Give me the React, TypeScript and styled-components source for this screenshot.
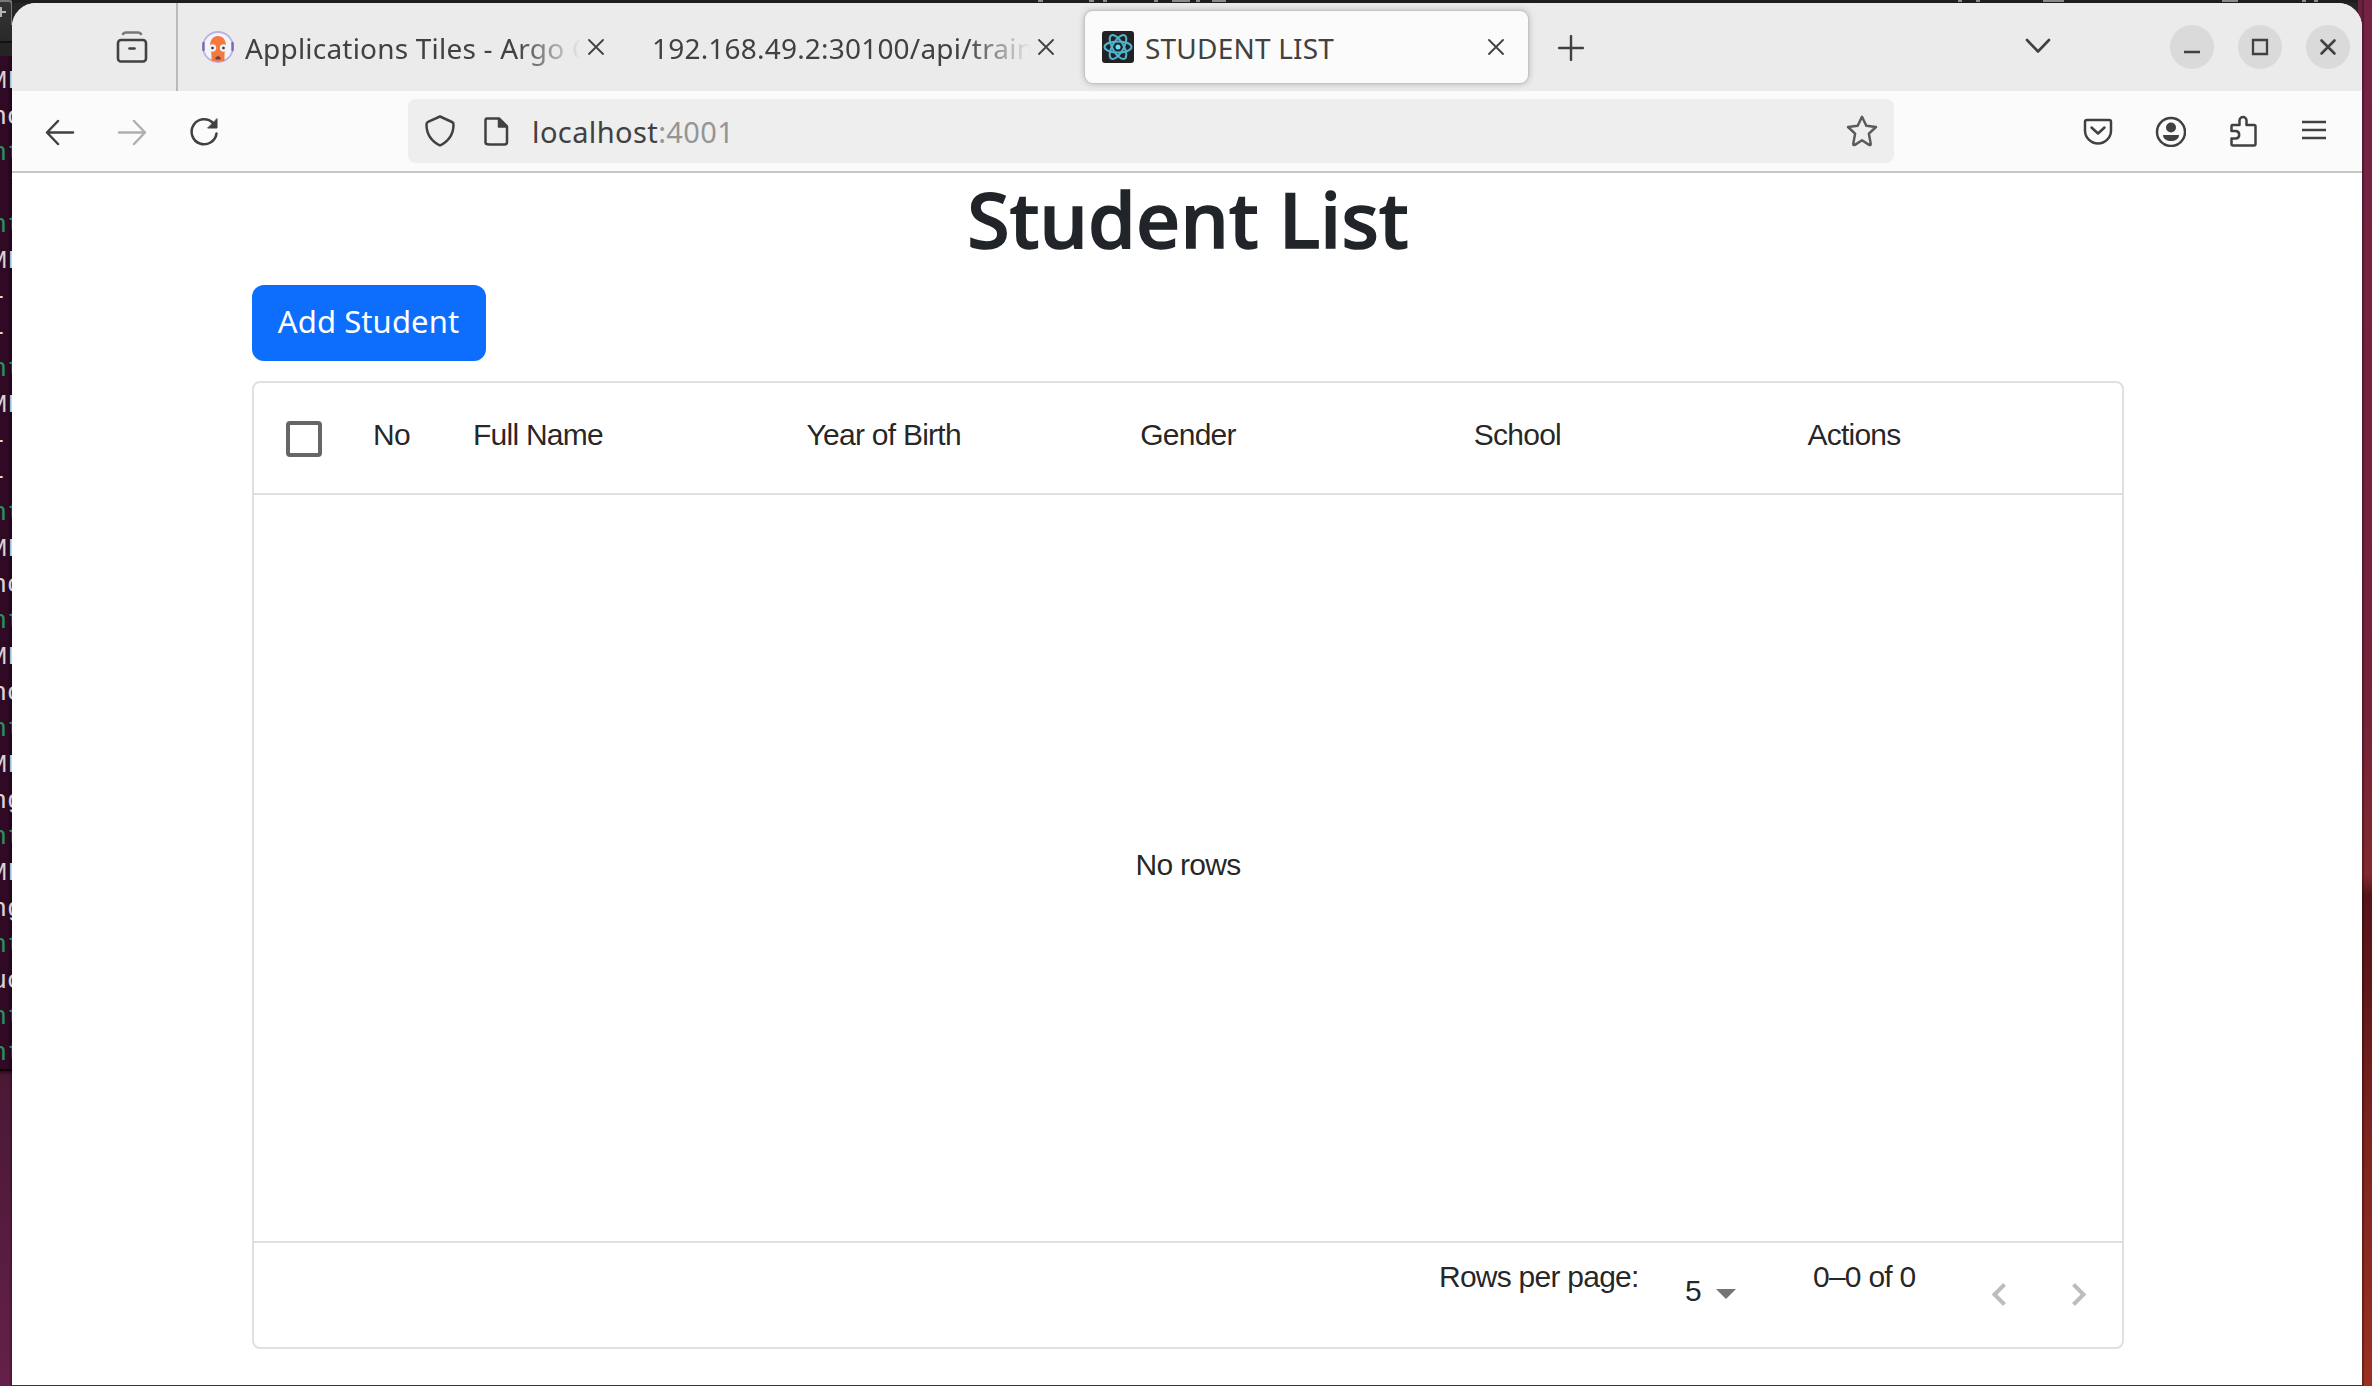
import React from "react";
import styled, { createGlobalStyle } from "styled-components";

const UI = `"Noto Sans", "Open Sans", sans-serif`;
const GRID = `"Liberation Sans", Arial, sans-serif`;

const Global = createGlobalStyle`
  *, *::before, *::after { box-sizing: border-box; }
  html, body { margin: 0; padding: 0; overflow: hidden; }
  svg { display: block; flex: none; }
`;

/* ---------- desktop behind the window ---------- */
const Desktop = styled.div`
  width: 2372px;
  height: 1386px;
  display: grid;
  grid-template-columns: 12px 2350px 10px;
  overflow: hidden;
  background: #6b2130;
`;
const Left = styled.div`
  display: flex;
  flex-direction: column;
  overflow: hidden;
  background: linear-gradient(90deg, transparent 9px, rgba(0, 0, 0, 0.3) 12px), linear-gradient(#2a0a1e 1071px, #4a1834 1075px, #64204a);
`;
const LeftBar = styled.div`
  height: 56px;
  flex: none;
  background: linear-gradient(#353535, #292929 41px, #121212 41px, #121212 43px, #242424 43px);
  overflow: hidden;
`;
const Terminal = styled.div`
  height: 1015px;
  flex: none;
  padding-top: 7px;
  overflow: hidden;
  border-bottom: 2px solid #100208;
  background: linear-gradient(90deg, #300a24 60%, #20041a);
`;
const TermLine = styled.div<{ $tone: string }>`
  height: 36px;
  margin-left: -9px;
  width: 40px;
  font: 26.6px/36px "Liberation Mono", monospace;
  white-space: pre;
  color: ${(p) => p.$tone};
`;
const Right = styled.div`
  box-shadow: inset 2px 0 1px rgba(0, 0, 0, 0.28);
  background: linear-gradient(
    #742344 0, #74223a 700px, #812a2e 875px, #561419 895px, #5f171a 985px, #7c241f 1130px, #9a3122 1386px
  );
`;
const Middle = styled.div`
  display: flex;
  flex-direction: column;
  background: linear-gradient(90deg, #262626 2346px, #6b2140 2346px) top / 100% 60px no-repeat, #6b2028;
`;
const TopStrip = styled.div`
  height: 3px;
  flex: none;
  background: linear-gradient(90deg, #1e1e1e 2346px, #6b2140 2346px);
`;
const Window = styled.div`
  height: 1382px;
  border-radius: 24px 24px 0 0;
  overflow: hidden;
  background: #fff;
  display: flex;
  flex-direction: column;
`;

/* ---------- browser chrome ---------- */
const TabStrip = styled.div`
  height: 88px;
  flex: none;
  display: flex;
  align-items: stretch;
  background: #ebebeb;
`;
const RecentArea = styled.div`
  width: 166px;
  padding: 28px 0 0 104px;
  border-right: 2px solid #bababa;
`;
const Tab = styled.div<{ $active?: boolean; $width: number; $left: number; $pad: number }>`
  width: ${(p) => p.$width}px;
  height: 72px;
  margin: 8px 0 0 ${(p) => p.$left}px;
  padding: 0 ${(p) => p.$pad}px 0 17px;
  display: flex;
  align-items: center;
  gap: 7px;
  border-radius: 8px;
  background: ${(p) => (p.$active ? "#fbfbfb" : "transparent")};
  box-shadow: ${(p) => (p.$active ? "0 0 0 1px #c4c4c4, 0 0 7px rgba(0,0,0,.3)" : "none")};
`;
const TabTitle = styled.div<{ $fade?: boolean }>`
  flex: 1;
  min-width: 0;
  height: 42px;
  padding: 2px 0 0 4px;
  font: 28px/40px ${UI};
  letter-spacing: 0.2px;
  color: #414141;
  white-space: nowrap;
  overflow: hidden;
  ${(p) => p.$fade && "mask-image: linear-gradient(90deg, #000 calc(100% - 64px), transparent 100%);"}
`;
const NewTab = styled.div`
  padding: 32px 0 0 30px;
`;
const ListTabs = styled.div`
  margin-left: auto;
  padding: 28px 0 0;
`;
const WindowButtons = styled.div`
  display: flex;
  gap: 24px;
  padding: 22px 12px 0 116px;
`;
const WindowButton = styled.div`
  width: 44px;
  height: 44px;
  border-radius: 50%;
  background: #dadada;
  display: grid;
  place-items: center;
`;
const Toolbar = styled.div`
  height: 82px;
  flex: none;
  display: flex;
  align-items: center;
  padding: 0 32px;
  background: #fbfbfb;
  border-bottom: 2px solid #c6c6c6;
`;
const NavButtons = styled.div`
  width: 364px;
  display: flex;
  gap: 40px;
`;
const UrlBar = styled.div`
  width: 1486px;
  height: 64px;
  padding: 0 16px;
  border-radius: 8px;
  background: #eee;
  display: flex;
  align-items: center;
`;
const UrlIcons = styled.div`
  display: flex;
  gap: 24px;
  width: 108px;
`;
const Url = styled.div`
  flex: 1;
  padding-top: 2px;
  font: 29px/40px ${UI};
  letter-spacing: 0.4px;
  color: #414141;
`;
const Port = styled.span`
  color: #959595;
`;
const ToolIcons = styled.div`
  margin-left: auto;
  display: flex;
  gap: 40px;
`;

/* ---------- page ---------- */
const Page = styled.main`
  flex: 1;
  padding: 0 238px 0 240px;
  display: flex;
  flex-direction: column;
`;
const Title = styled.h1`
  margin: 0;
  height: 112px;
  font: 500 77px/92px ${UI};
  letter-spacing: 0.25px;
  -webkit-text-stroke: 1.6px #212529;
  color: #212529;
  text-align: center;
`;
const AddButton = styled.button`
  width: 234px;
  height: 76px;
  margin: 0 0 20px;
  padding: 0 1px 5px 0;
  border: 0;
  border-radius: 12px;
  background: #0d6efd;
  color: #fff;
  font: 31px/44px ${UI};
  letter-spacing: 0.1px;
`;
const DataGrid = styled.section`
  height: 968px;
  border: 2px solid #e0e0e0;
  border-radius: 8px;
  display: flex;
  flex-direction: column;
  font: 30px/40px ${GRID};
  letter-spacing: -0.75px;
  color: rgba(0, 0, 0, 0.87);
`;
const HeadRow = styled.div`
  height: 112px;
  flex: none;
  display: grid;
  grid-template-columns: 100px 100px repeat(5, 333.6px);
  border-bottom: 2px solid #e0e0e0;
`;
const HeadCell = styled.div`
  padding: 32px 0 0 19px;
`;
const CheckCell = styled.div`
  padding: 38px 0 0 32px;
`;
const Checkbox = styled.div`
  width: 36px;
  height: 36px;
  border: 4px solid #666;
  border-radius: 4px;
`;
const Empty = styled.div`
  flex: 1;
  display: grid;
  place-items: center;
  padding-bottom: 6px;
`;
const Footer = styled.div`
  height: 106px;
  flex: none;
  border-top: 2px solid #e0e0e0;
  display: flex;
  justify-content: flex-end;
  padding: 14px 19px 0 0;
`;
const RowsLabel = styled.div`
  width: 246px;
`;
const PageSize = styled.div`
  width: 128px;
  display: flex;
  gap: 15px;
  padding-top: 14px;
`;
const Arrow = styled.i`
  margin-top: 18px;
  width: 0;
  height: 0;
  border: 10px solid transparent;
  border-top-color: #757575;
  border-bottom: 0;
`;
const RangeLabel = styled.div`
  width: 162px;
`;
const Pager = styled.div`
  display: flex;
  gap: 32px;
  padding-top: 13px;
`;

const INK = "#414141";
const Icon = ({ children, size = 32, color = INK, box = 32, w = 2.3 }: {
  children: React.ReactNode; size?: number; color?: string; box?: number; w?: number;
}) => (
  <svg width={size} height={size} viewBox={`0 0 ${box} ${box}`} fill="none" stroke={color}
    strokeWidth={w} strokeLinecap="round" strokeLinejoin="round">{children}</svg>
);
const Close = () => <Icon size={16} box={16} w={1.8}><path d="M1 1l14 14M15 1L1 15" /></Icon>;

const Argo = () => (
  <Icon>
    <circle cx="16" cy="16" r="15" fill="#f4f4fb" stroke="#b9b3e2" strokeWidth="1.8" />
    <path d="M1.5 12v7M30.500 12v7" stroke="#7d66b8" strokeWidth="2.4" />
    <path d="M8 15c0-6 3-10 8-10s8 4 8 10c0 4-1.500 5-1.500 9v5q-1.500 2-3 1-3.500 1.500-7 0-1.500.8-3-1v-5c0-4-1.500-5-1.500-9z" fill="#f4783f" stroke="none" />
    <circle cx="10.500" cy="17" r="3.700" fill="#eef2f4" stroke="none" />
    <circle cx="21.500" cy="17" r="3.700" fill="#eef2f4" stroke="none" />
    <circle cx="10.500" cy="17" r="1.300" fill="#333" stroke="none" />
    <circle cx="21.500" cy="17" r="1.300" fill="#333" stroke="none" />
    <path d="M13.500 26.500q2.500-2.500 5 0v2h-5z" fill="#5b4a48" stroke="none" />
  </Icon>
);
const ReactMark = () => (
  <Icon color="#4fb4d0" w={2}>
    <rect width="32" height="32" rx="3" fill="#222" stroke="none" />
    {[0, 60, 120].map((a) => (
      <ellipse key={a} cx="16" cy="16" rx="13.500" ry="5.600" transform={`rotate(${a} 16 16)`} />
    ))}
    <circle cx="16" cy="16" r="2.500" fill="#61dafb" stroke="none" />
  </Icon>
);

const G = "#22925f";
const Wt = "#d8d3d6";
const lines: [string, string][] = [
  ["ML", Wt], ["no", Wt], ["nt", G], [" l", "#1b1552"], ["nt", G], ["ML", Wt], ["- ", Wt], ["-:", Wt],
  ["nt", G], ["ML", Wt], ["- ", Wt], ["-:", Wt], ["nt", G], ["ML", Wt], ["no", Wt], ["nt", G],
  ["ML", Wt], ["no", Wt], ["nt", G], ["ML", Wt], ["ng", Wt], ["nt", G], ["ML", Wt], ["ng", Wt],
  ["nt", G], ["uo", Wt], ["nt", G], ["nt", G],
];
const stripMarks: [number, number][] = [
  [1038, 5], [1089, 5], [1103, 4], [1154, 4], [1172, 18], [1196, 4], [1212, 14],
  [1958, 4], [1976, 4], [2043, 21], [2222, 16], [2302, 4], [2314, 4],
];
const columns = ["No", "Full Name", "Year of Birth", "Gender", "School", "Actions"];

export default function App() {
  return (
    <Desktop>
      <Global />
      <Left>
        <LeftBar>
          <svg width="12" height="41" viewBox="0 0 12 41" stroke="#b5b5b5" strokeWidth="2" fill="none">
            <path d="M0 12h6M1 7v10" /><path d="M0 1h9q3 0 3 4v20" stroke="#777" />
          </svg>
        </LeftBar>
        <Terminal>
          {lines.map(([t, c], i) => <TermLine key={i} $tone={c}>{t}</TermLine>)}
        </Terminal>
      </Left>

      <Middle>
        <TopStrip>
          <svg width="2350" height="3">
            {stripMarks.map(([x, w]) => <rect key={x} x={x - 12} y="0" width={w} height="2" fill="#8a8a8a" />)}
          </svg>
        </TopStrip>
        <Window>
          <TabStrip>
            <RecentArea>
              <Icon w={2.6}><path d="M7 3q1-1.500 3-1.500h12q2 0 3 1.500" stroke="#777" /><rect x="2" y="9" width="28" height="21.500" rx="3" /><path d="M13.500 17.500h5" /></Icon>
            </RecentArea>
            <Tab $width={426} $left={7} $pad={7}>
              <Argo />
              <TabTitle $fade>Applications Tiles - Argo CD</TabTitle>
              <Close />
            </Tab>
            <Tab $width={448} $left={20} $pad={25}>
              <TabTitle $fade>192.168.49.2:30100/api/trainees</TabTitle>
              <Close />
            </Tab>
            <Tab $active $width={443} $left={6} $pad={24}>
              <ReactMark />
              <TabTitle>STUDENT LIST</TabTitle>
              <Close />
            </Tab>
            <NewTab><Icon size={26} box={26} w={2.4}><path d="M13 1v24M1 13h24" /></Icon></NewTab>
            <ListTabs><Icon w={2.6}><path d="M5 9l11 11.500L27 9" /></Icon></ListTabs>
            <WindowButtons>
              <WindowButton><Icon size={20} box={20}><path d="M2 15h16" strokeLinecap="butt" /></Icon></WindowButton>
              <WindowButton><Icon size={20} box={20}><path d="M3 3h14v14H3z" strokeLinejoin="miter" /></Icon></WindowButton>
              <WindowButton><Icon size={20} box={20} w={2.6}><path d="M3.500 3.500l13 13M16.500 3.500l-13 13" /></Icon></WindowButton>
            </WindowButtons>
          </TabStrip>

          <Toolbar>
            <NavButtons>
              <Icon w={2.5}><path d="M29 17.500H3M14 6L3 17.500 14 29" /></Icon>
              <Icon w={2.5} color="#b0b0b0"><path d="M3 17.500h26M18 6l11 11.500L18 29" /></Icon>
              <Icon w={2.5}><path d="M25 8A12.500 12.500 0 1 0 28.500 18.500" /><path d="M29 4v9h-9z" fill={INK} strokeWidth="1" /></Icon>
            </NavButtons>
            <UrlBar>
              <UrlIcons>
                <Icon w={2.5}><path d="M16 1.500l12 5.500q1.500.6 1.500 2.500C29.500 18 26 25.500 16 30.500 6 25.500 2.500 18 2.500 9.500 2.500 7.600 3 7.200 4 6.800z" /></Icon>
                <Icon w={2.5}><path d="M7 3.500h12l8 8V27q0 2.500-2.500 2.500h-15Q5.500 29.500 5.500 27.500V5.500q0-2 1.500-2z" /><path d="M18.500 3.500V12H27z" fill={INK} strokeWidth="1.500" /></Icon>
              </UrlIcons>
              <Url>localhost<Port>:4001</Port></Url>
              <Icon w={2.5} color="#5b5b5b"><path d="M16 1.800l4.300 8.900 9.700 1.300-7.100 6.700 1.800 9.900q.2 2-1.600 1.300L16 25.300l-7.100 4.600q-1.800.7-1.600-1.300l1.800-9.900L2 12l9.700-1.300z" /></Icon>
            </UrlBar>
            <ToolIcons>
              <Icon w={2.5}><path d="M5 5h22q2 0 2 2v8.500a13 13 0 0 1-26 0V7q0-2 2-2z" /><path d="M9.500 12.500l6.500 6 6.500-6" /></Icon>
              <Icon w={2.5}><circle cx="17" cy="17" r="14" /><circle cx="17" cy="12.500" r="5" fill={INK} stroke="none" /><path d="M9 20h16c0 8-16 8-16 0z" fill={INK} stroke="none" /></Icon>
              <Icon w={2.5}><path d="M6 10h7.500V5.500a3.500 3.500 0 0 1 7 0V10H28q1.500 0 1.500 1.500V29q0 1.500-1.500 1.500H7q-1.500 0-1.500-1.500v-5.500H10a3.800 3.800 0 0 0 0-7.500H5.500v-4.500Q5.500 10 6 10z" /></Icon>
              <Icon><path d="M4 7h24M4 15h24M4 23h24" strokeLinecap="butt" /></Icon>
            </ToolIcons>
          </Toolbar>

          <Page>
            <Title>Student List</Title>
            <AddButton>Add Student</AddButton>
            <DataGrid>
              <HeadRow>
                <CheckCell><Checkbox /></CheckCell>
                {columns.map((c) => <HeadCell key={c}>{c}</HeadCell>)}
              </HeadRow>
              <Empty>No rows</Empty>
              <Footer>
                <RowsLabel>Rows per page:</RowsLabel>
                <PageSize>5<Arrow /></PageSize>
                <RangeLabel>0–0 of 0</RangeLabel>
                <Pager>
                  <Icon size={48} box={48} w={4} color="#bdbdbd"><path d="M29.500 14.500L19.500 24.500l10 10" strokeLinecap="butt" strokeLinejoin="miter" /></Icon>
                  <Icon size={48} box={48} w={4} color="#bdbdbd"><path d="M18.500 14.500l10 10-10 10" strokeLinecap="butt" strokeLinejoin="miter" /></Icon>
                </Pager>
              </Footer>
            </DataGrid>
          </Page>
        </Window>
      </Middle>
      <Right />
    </Desktop>
  );
}
